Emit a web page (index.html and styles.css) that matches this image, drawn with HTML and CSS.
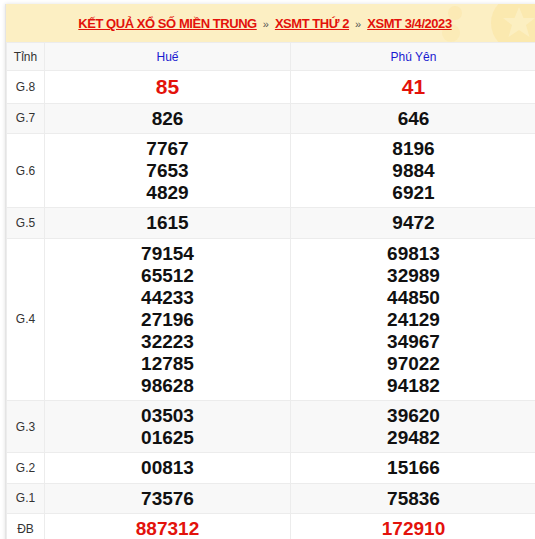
FILE: index.html
```html
<!DOCTYPE html>
<html lang="vi">
<head>
<meta charset="utf-8">
<title>XSMT 3/4/2023</title>
<link rel="stylesheet" href="styles.css">
</head>
<body>
<div class="box">
  <div class="head">
    <svg class="deco" width="110" height="40" viewBox="0 0 110 40" aria-hidden="true">
      <circle cx="24" cy="10" r="7" fill="#fbe6a8" opacity="0.5"/>
      <circle cx="20" cy="30" r="9" fill="#fbe6a8" opacity="0.45"/>
      <circle cx="88" cy="20" r="28" fill="#fae4a2" opacity="0.6"/>
      <polygon points="88,4 92.5,15 104,15 95,22 98.5,34 88,27 77.5,34 81,22 72,15 83.5,15" fill="#fdf0c6" opacity="0.8"/>
    </svg>
    <h2 class="title"><a href="#">KẾT QUẢ XỔ SỐ MIỀN TRUNG</a><span class="sep">»</span><a href="#">XSMT THỨ 2</a><span class="sep">»</span><a href="#">XSMT 3/4/2023</a></h2>
  </div>
  <table class="kq">
    <colgroup><col class="c1"><col class="c2"><col class="c3"></colgroup>
    <thead>
      <tr class="alt"><th class="lbl">Tỉnh</th><th class="prov">Huế</th><th class="prov">Phú Yên</th></tr>
    </thead>
    <tbody>
      <tr><td class="lbl">G.8</td><td class="num big red">85</td><td class="num big red">41</td></tr>
      <tr class="alt"><td class="lbl">G.7</td><td class="num">826</td><td class="num">646</td></tr>
      <tr><td class="lbl">G.6</td><td class="num">7767<br>7653<br>4829</td><td class="num">8196<br>9884<br>6921</td></tr>
      <tr class="alt"><td class="lbl">G.5</td><td class="num">1615</td><td class="num">9472</td></tr>
      <tr><td class="lbl">G.4</td><td class="num">79154<br>65512<br>44233<br>27196<br>32223<br>12785<br>98628</td><td class="num">69813<br>32989<br>44850<br>24129<br>34967<br>97022<br>94182</td></tr>
      <tr class="alt"><td class="lbl">G.3</td><td class="num">03503<br>01625</td><td class="num">39620<br>29482</td></tr>
      <tr><td class="lbl">G.2</td><td class="num">00813</td><td class="num">15166</td></tr>
      <tr class="alt"><td class="lbl">G.1</td><td class="num">73576</td><td class="num">75836</td></tr>
      <tr><td class="lbl">ĐB</td><td class="num red">887312</td><td class="num red">172910</td></tr>
    </tbody>
  </table>
</div>
</body>
</html>
```
FILE: styles.css
```css
html, body {
  margin: 0;
  padding: 0;
  background: #ffffff;
  overflow: hidden;
}
body {
  font-family: "Liberation Sans", Arial, sans-serif;
  color: #000;
}
.box {
  margin: 4px 0 0 5px;
  width: 531px;
  box-shadow: 0 0 4px rgba(0, 0, 0, 0.12);
  border-left: 1px solid #e4e4e4;
}
.head {
  position: relative;
  background: #fcefc3;
  height: 38px;
  display: flex;
  align-items: center;
  justify-content: center;
  overflow: hidden;
}
.deco {
  position: absolute;
  right: -4px;
  top: -1px;
}
.title {
  position: relative;
  margin: 0;
  font-size: 13px;
  font-weight: bold;
  letter-spacing: -0.45px;
  line-height: 18px;
  padding-right: 13px;
  padding-top: 1px;
}
.title a {
  color: #e3120b;
  text-decoration: underline;
}
.sep {
  color: #555;
  font-size: 11px;
  font-weight: normal;
  letter-spacing: 0;
  margin: 0 6px;
}
.kq {
  border-collapse: collapse;
  width: 530px;
  table-layout: fixed;
}
.c1 { width: 38px; }
.c2 { width: 246px; }
.c3 { width: 246px; }
.kq th, .kq td {
  border: 1px solid #ececec;
  text-align: center;
  vertical-align: middle;
}
.kq th {
  height: 27px;
  font-size: 12px;
  font-weight: normal;
  padding: 0;
}
.kq th.lbl { color: #333; }
.kq th.prov { color: #1a1ad0; }
.kq tr.alt { background: #f8f8f8; }
.kq td.lbl {
  font-size: 12px;
  color: #333;
  padding: 0;
}
.kq td.num {
  font-size: 19px;
  font-weight: bold;
  line-height: 22px;
  padding: 4px 0 3.3px;
  color: #111;
}
.kq td.big {
  font-size: 21px;
  line-height: 24.5px;
}
.kq td.red { color: #e3120b; }
```
